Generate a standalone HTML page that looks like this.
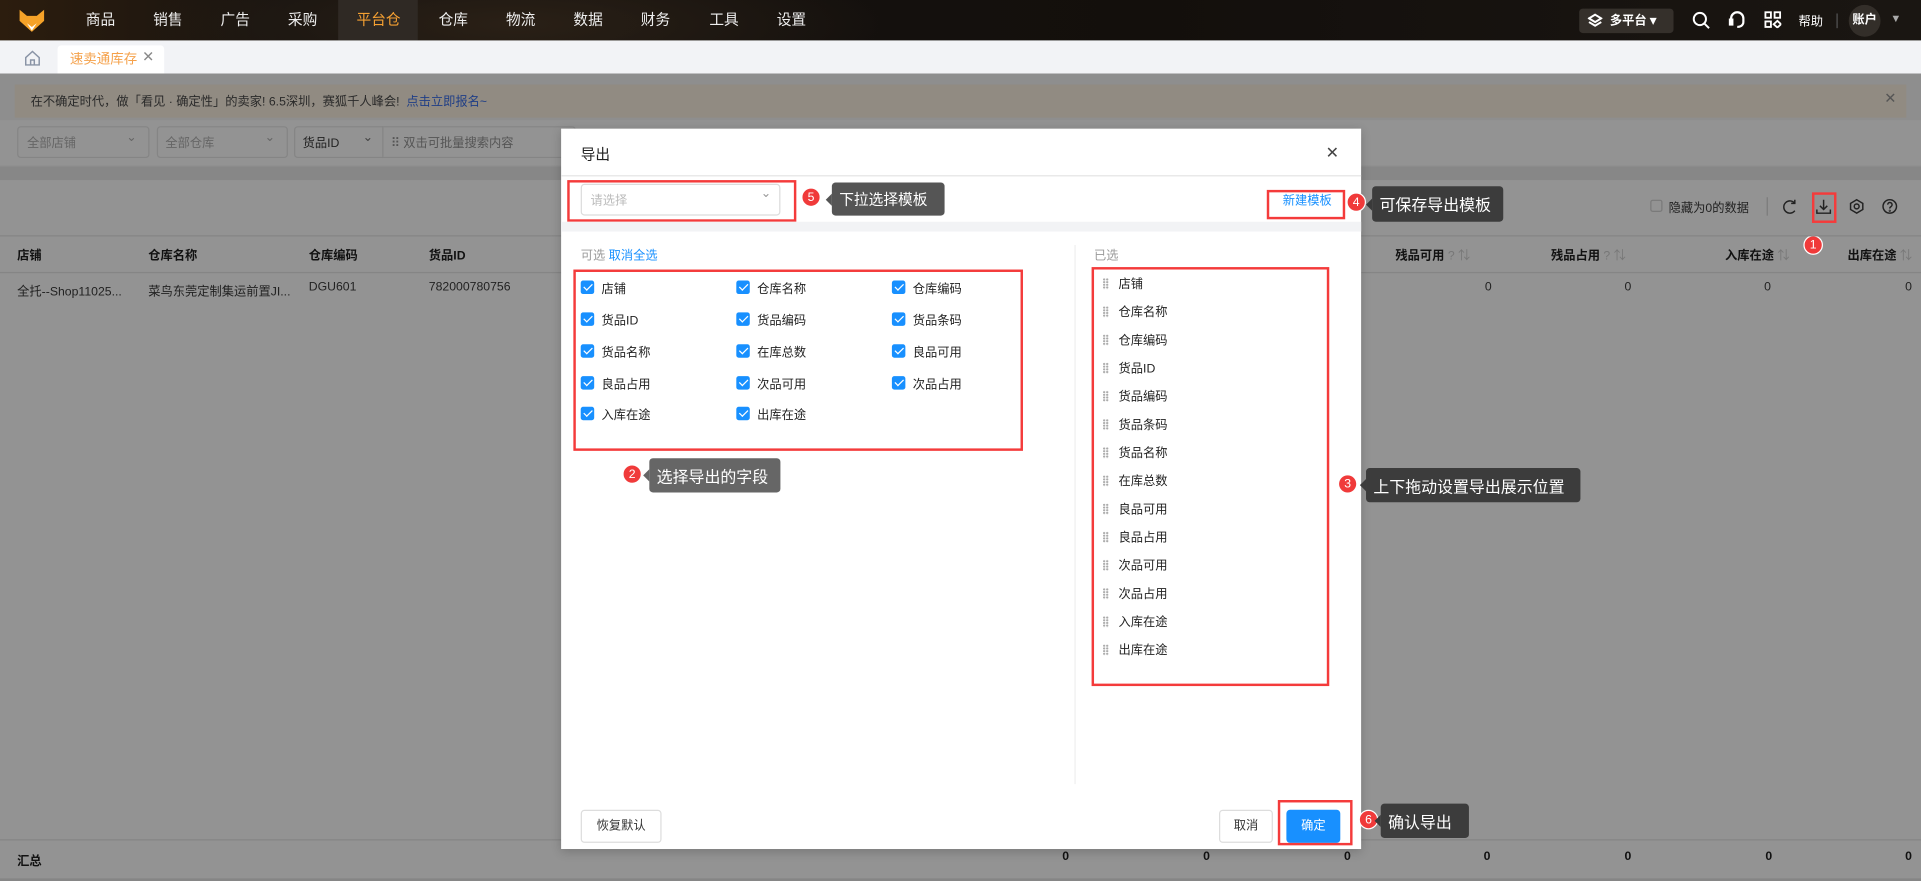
<!DOCTYPE html>
<html><head><meta charset="utf-8">
<style>
*{box-sizing:border-box;margin:0;padding:0}
html,body{width:1921px;height:881px;overflow:hidden;background:#8f8f8f}
body{font-family:"Liberation Sans","Noto Sans CJK SC",sans-serif}
#w{position:absolute;left:0;top:0;width:1568px;height:719px;transform:scale(1.22513);transform-origin:0 0;font-size:11px;color:#222}
.a{position:absolute}
.nav{left:0;top:0;width:1568px;height:33px;background:radial-gradient(ellipse 300px 60px at 420px 20px,#2a2016,transparent),linear-gradient(90deg,#2c1d0e 0%,#171310 15%,#130f0c 60%,#1a1612 100%)}
.nav .m{top:9px;color:#eee;font-size:12px}
.t,.h{white-space:nowrap;margin-top:-2px}
.cb{width:11px;height:11px;background:#1890ff;border-radius:2px}
.cb:after{content:"";position:absolute;left:3.5px;top:1px;width:3px;height:6px;border:solid #fff;border-width:0 1.5px 1.5px 0;transform:rotate(45deg)}
.red{border:2px solid #f43b3b}
.bd{width:16px;height:16px;border-radius:50%;background:#f03a3a;color:#fff;font-size:10px;text-align:center;line-height:15px;border:1px solid #fff}
.tip{background:#3c3c3c;color:#fff;font-size:12px;border-radius:3px;padding:0 6px;display:flex;align-items:center}
.tip .t{margin-top:0}
.tip:before{content:"";position:absolute;left:-5px;top:50%;margin-top:-5px;border:5px solid transparent;border-left:0;border-right-color:inherit}
.h{font-weight:bold;font-size:10px;color:#111}
.hd{width:5px;height:9px;background:radial-gradient(circle,#aaa 0.8px,transparent 1px) 0 0/2.5px 2.2px}
.btn{border:1px solid #ddd;border-radius:3px;background:#fff;font-size:10px;text-align:center;color:#333}
</style></head><body><div id="w">
<div class="a nav">
<svg class="a" style="left:15px;top:7px" width="22" height="20" viewBox="0 0 22 20"><path d="M1 1 L7 6 L15 6 L21 1 L21 10 L11 19 L1 10 Z" fill="#f5a228"/><path d="M7 12 L11 15 L15 12 L11 18Z" fill="#fff"/></svg>
<span class="a m t" style="left:70px">商品</span><span class="a m t" style="left:125px">销售</span><span class="a m t" style="left:180px">广告</span><span class="a m t" style="left:235px">采购</span>
<div class="a" style="left:276px;top:0;width:65px;height:33px;background:#2f2924"></div>
<span class="a m t" style="left:291px;color:#f5a032">平台仓</span>
<span class="a m t" style="left:358px">仓库</span><span class="a m t" style="left:413px">物流</span><span class="a m t" style="left:468px">数据</span><span class="a m t" style="left:523px">财务</span><span class="a m t" style="left:579px">工具</span><span class="a m t" style="left:634px">设置</span>
<div class="a" style="left:1289px;top:7px;width:77px;height:20px;background:#35302b;border-radius:3px"></div>
<svg class="a" style="left:1296px;top:11px" width="12" height="12" viewBox="0 0 12 12" fill="none" stroke="#fff" stroke-width="1.6"><path d="M6 1L11 4 6 7 1 4Z"/><path d="M1 7L6 10 11 7"/></svg>
<span class="a t" style="left:1314px;top:10px;color:#fff;font-size:10px;font-weight:bold">多平台 ▾</span>
<svg class="a" style="left:1381px;top:9px" width="15" height="15" viewBox="0 0 15 15" fill="none" stroke="#fff" stroke-width="1.6"><circle cx="6.5" cy="6.5" r="5"/><path d="M10 10L14 14"/></svg>
<svg class="a" style="left:1411px;top:9px" width="14" height="15" viewBox="0 0 14 15" fill="none" stroke="#fff" stroke-width="1.8"><path d="M2 9V6a5 5 0 0110 0v3M12 9c0 3-3 4-5 4"/><rect x="1" y="7" width="2" height="4" fill="#fff"/></svg>
<svg class="a" style="left:1440px;top:9px" width="14" height="14" viewBox="0 0 14 14" fill="none" stroke="#fff" stroke-width="1.5"><rect x="1" y="1" width="4.5" height="4.5"/><rect x="8.5" y="1" width="4.5" height="4.5"/><rect x="1" y="8.5" width="4.5" height="4.5"/><path d="M10.75 8l3 2.75-3 2.75-3-2.75z"/></svg>
<span class="a t" style="left:1468px;top:11px;color:#fff;font-size:10px">帮助</span>
<div class="a" style="left:1499px;top:11px;width:1px;height:12px;background:#555"></div>
<div class="a" style="left:1509px;top:4px;width:26px;height:26px;border-radius:50%;background:#332e29;color:#fff;font-size:10px;font-weight:bold;text-align:center;line-height:26px">账户</div>
<span class="a" style="left:1543px;top:10px;color:#aaa;font-size:9px">▼</span>
</div>
<div class="a" style="left:0;top:33px;width:1568px;height:27px;background:#f2f3f6"></div>
<svg class="a" style="left:20px;top:41px" width="13" height="13" viewBox="0 0 13 13" fill="none" stroke="#8a94a6" stroke-width="1.2"><path d="M1 6L6.5 1 12 6V12H1Z"/><path d="M5 12V8h3v4"/></svg>
<div class="a" style="left:47px;top:37px;width:87px;height:23px;background:#fff;border-radius:3px 3px 0 0"></div>
<span class="a t" style="left:57px;top:42px;color:#f5a14a;font-size:11px">速卖通库存</span>
<span class="a" style="left:116px;top:39px;color:#888;font-size:12px">✕</span>
<div class="a" style="left:0;top:60px;width:1568px;height:659px;background:#8e8e8e"></div>
<div class="a" style="left:12px;top:69px;width:1544px;height:27px;background:#918b82"></div>
<span class="a t" style="left:25px;top:76px;font-size:10px;color:#2a2a2a">在不确定时代，做「看见 · 确定性」的卖家! 6.5深圳，赛狐千人峰会! &nbsp;<span style="color:#1f3e86">点击立即报名~</span></span>
<span class="a" style="left:1538px;top:73px;color:#555;font-size:12px">✕</span>
<div class="a" style="left:0;top:98px;width:1568px;height:37px;background:#939393"></div>
<div class="a" style="left:14px;top:103px;width:108px;height:26px;border:1px solid #858585;border-radius:3px"></div><span class="a t" style="left:22px;top:110px;color:#666;font-size:10px">全部店铺</span><span class="a" style="left:103px;top:107px;color:#666;font-size:10px">⌄</span>
<div class="a" style="left:128px;top:103px;width:107px;height:26px;border:1px solid #858585;border-radius:3px"></div><span class="a t" style="left:135px;top:110px;color:#666;font-size:10px">全部仓库</span><span class="a" style="left:216px;top:107px;color:#666;font-size:10px">⌄</span>
<div class="a" style="left:240px;top:103px;width:230px;height:26px;border:1px solid #858585;border-radius:3px"></div><div class="a" style="left:312px;top:103px;width:1px;height:26px;background:#858585"></div>
<span class="a t" style="left:247px;top:110px;color:#222;font-size:10px">货品ID</span><span class="a" style="left:296px;top:107px;color:#444;font-size:10px">⌄</span>
<span class="a t" style="left:319px;top:110px;color:#555;font-size:10px">⠿ 双击可批量搜索内容</span>
<div class="a" style="left:0;top:136px;width:1568px;height:11px;background:#878787"></div>
<div class="a" style="left:0;top:147px;width:1568px;height:572px;background:#939393"></div>
<div class="a" style="left:1347px;top:163px;width:10px;height:10px;border:1px solid #7a7a7a;border-radius:2px"></div>
<span class="a t" style="left:1362px;top:163px;font-size:10px;color:#222">隐藏为0的数据</span>
<div class="a" style="left:1442px;top:161px;width:1px;height:15px;background:#7a7a7a"></div>
<svg class="a" style="left:1455px;top:162px" width="12" height="13" viewBox="0 0 12 13" fill="none" stroke="#222" stroke-width="1.2"><path d="M10 4A5 5 0 1 0 10 10M10 1v3H7"/></svg>
<div class="a red" style="left:1479px;top:157px;width:20px;height:25px"></div>
<svg class="a" style="left:1482px;top:162px" width="13" height="13" viewBox="0 0 13 13" fill="none" stroke="#222" stroke-width="1.2"><path d="M6.5 1v8M3.5 6l3 3 3-3M1 9v3h11V9"/></svg>
<svg class="a" style="left:1509px;top:162px" width="13" height="13" viewBox="0 0 13 13" fill="none" stroke="#222" stroke-width="1.2"><path d="M6.5 1l5 3v5l-5 3-5-3V4z"/><circle cx="6.5" cy="6.5" r="2"/></svg>
<svg class="a" style="left:1536px;top:162px" width="13" height="13" viewBox="0 0 13 13" fill="none" stroke="#222" stroke-width="1.2"><circle cx="6.5" cy="6.5" r="5.5"/><path d="M4.8 5a1.8 1.8 0 113 1.4c-.8.5-1.3.8-1.3 1.8"/><circle cx="6.5" cy="10" r=".3"/></svg>
<div class="a bd" style="left:1472px;top:192px">1</div>
<div class="a" style="left:0;top:192px;width:1568px;height:1px;background:#858585"></div>
<div class="a" style="left:0;top:222px;width:1568px;height:1px;background:#858585"></div>
<span class="a h" style="left:14px;top:202px">店铺</span><span class="a h" style="left:121px;top:202px">仓库名称</span><span class="a h" style="left:252px;top:202px">仓库编码</span><span class="a h" style="left:350px;top:202px">货品ID</span>
<span class="a h" style="left:1139px;top:202px">残品可用 <span style="color:#777;font-weight:normal">? ⇅</span></span>
<span class="a h" style="left:1266px;top:202px">残品占用 <span style="color:#777;font-weight:normal">? ⇅</span></span>
<span class="a h" style="left:1408px;top:202px">入库在途 <span style="color:#777;font-weight:normal">⇅</span></span>
<span class="a h" style="left:1508px;top:202px">出库在途 <span style="color:#777;font-weight:normal">⇅</span></span>
<span class="a t" style="left:14px;top:231px;font-size:10px">全托--Shop11025...</span><span class="a t" style="left:121px;top:231px;font-size:10px">菜鸟东莞定制集运前置JI...</span><span class="a t" style="left:252px;top:231px;font-size:10px">DGU601</span><span class="a t" style="left:350px;top:231px;font-size:10px">782000780756</span>
<span class="a t" style="left:1212px;top:231px;font-size:10px">0</span><span class="a t" style="left:1326px;top:231px;font-size:10px">0</span><span class="a t" style="left:1440px;top:231px;font-size:10px">0</span><span class="a t" style="left:1555px;top:231px;font-size:10px">0</span>
<div class="a" style="left:0;top:685px;width:1568px;height:1px;background:#858585"></div>
<div class="a" style="left:0;top:717px;width:1568px;height:2px;background:#858585"></div>
<span class="a h" style="left:14px;top:696px">汇总</span>
<span class="a h" style="left:867px;top:696px">0</span><span class="a h" style="left:982px;top:696px">0</span><span class="a h" style="left:1097px;top:696px">0</span><span class="a h" style="left:1211px;top:696px">0</span><span class="a h" style="left:1326px;top:696px">0</span><span class="a h" style="left:1441px;top:696px">0</span><span class="a h" style="left:1555px;top:696px">0</span>
<div class="a" style="left:458px;top:105px;width:653px;height:588px;background:#fff;box-shadow:0 2px 8px rgba(0,0,0,.2)"></div>
<span class="a t" style="left:474px;top:119px;font-size:12px;color:#222">导出</span>
<span class="a" style="left:1082px;top:117px;font-size:13px;color:#444">✕</span>
<div class="a" style="left:458px;top:143px;width:653px;height:1px;background:#e4e4e4"></div>
<div class="a" style="left:474px;top:150px;width:163px;height:26px;border:1px solid #dcdcdc;border-radius:3px"></div>
<span class="a t" style="left:482px;top:157px;font-size:10px;color:#bbb">请选择</span><span class="a" style="left:621px;top:153px;font-size:10px;color:#999">⌄</span>
<div class="a red" style="left:463px;top:147px;width:187px;height:34px"></div>
<div class="a bd" style="left:654px;top:153px">5</div>
<div class="a tip" style="left:679px;top:149px;width:92px;height:27px;border-color:#555;background:#555"><span class="t">下拉选择模板</span></div>
<span class="a t" style="left:1047px;top:157px;font-size:10px;color:#1890ff">新建模板</span>
<div class="a red" style="left:1034px;top:155px;width:64px;height:24px"></div>
<div class="a bd" style="left:1099px;top:157px">4</div>
<div class="a tip" style="left:1120px;top:152px;width:107px;height:29px;border-color:#3a3a3a"><span class="t" style="font-size:13px">可保存导出模板</span></div>
<div class="a" style="left:458px;top:181px;width:653px;height:8px;background:#f2f3f5"></div>
<span class="a t" style="left:474px;top:202px;font-size:10px;color:#999">可选 <span style="color:#1890ff">取消全选</span></span>
<div class="a red" style="left:468px;top:220px;width:367px;height:148px"></div>
<div class="a bd" style="left:508px;top:379px">2</div>
<div class="a tip" style="left:530px;top:374px;width:107px;height:28px;border-color:#666;background:#666"><span class="t" style="font-size:13px">选择导出的字段</span></div>
<div class="a" style="left:877px;top:200px;width:1px;height:440px;background:#eee"></div>
<span class="a t" style="left:893px;top:202px;font-size:10px;color:#999">已选</span>
<div class="a red" style="left:891px;top:218px;width:194px;height:342px"></div>
<div class="a bd" style="left:1092px;top:387px">3</div>
<div class="a tip" style="left:1115px;top:382px;width:175px;height:28px;border-color:#3c3c3c"><span class="t" style="font-size:13px">上下拖动设置导出展示位置</span></div>
<div class="a btn" style="left:474px;top:661px;width:66px;height:27px;line-height:25px">恢复默认</div>
<div class="a btn" style="left:995px;top:661px;width:44px;height:27px;line-height:25px">取消</div>
<div class="a" style="left:1050px;top:661px;width:44px;height:27px;background:#1890ff;border-radius:3px;color:#fff;font-size:10px;text-align:center;line-height:27px">确定</div>
<div class="a red" style="left:1043px;top:653px;width:61px;height:37px"></div>
<div class="a bd" style="left:1109px;top:661px">6</div>
<div class="a tip" style="left:1127px;top:656px;width:72px;height:28px;border-color:#3a3a3a"><span class="t" style="font-size:13px">确认导出</span></div>
<div class="a cb" style="left:474px;top:229px"></div><span class="a t" style="left:491px;top:229px;font-size:10px">店铺</span>
<div class="a cb" style="left:601px;top:229px"></div><span class="a t" style="left:618px;top:229px;font-size:10px">仓库名称</span>
<div class="a cb" style="left:728px;top:229px"></div><span class="a t" style="left:745px;top:229px;font-size:10px">仓库编码</span>
<div class="a cb" style="left:474px;top:255px"></div><span class="a t" style="left:491px;top:255px;font-size:10px">货品ID</span>
<div class="a cb" style="left:601px;top:255px"></div><span class="a t" style="left:618px;top:255px;font-size:10px">货品编码</span>
<div class="a cb" style="left:728px;top:255px"></div><span class="a t" style="left:745px;top:255px;font-size:10px">货品条码</span>
<div class="a cb" style="left:474px;top:281px"></div><span class="a t" style="left:491px;top:281px;font-size:10px">货品名称</span>
<div class="a cb" style="left:601px;top:281px"></div><span class="a t" style="left:618px;top:281px;font-size:10px">在库总数</span>
<div class="a cb" style="left:728px;top:281px"></div><span class="a t" style="left:745px;top:281px;font-size:10px">良品可用</span>
<div class="a cb" style="left:474px;top:307px"></div><span class="a t" style="left:491px;top:307px;font-size:10px">良品占用</span>
<div class="a cb" style="left:601px;top:307px"></div><span class="a t" style="left:618px;top:307px;font-size:10px">次品可用</span>
<div class="a cb" style="left:728px;top:307px"></div><span class="a t" style="left:745px;top:307px;font-size:10px">次品占用</span>
<div class="a cb" style="left:474px;top:332px"></div><span class="a t" style="left:491px;top:332px;font-size:10px">入库在途</span>
<div class="a cb" style="left:601px;top:332px"></div><span class="a t" style="left:618px;top:332px;font-size:10px">出库在途</span>
<div class="a hd" style="left:900px;top:227px"></div><span class="a t" style="left:913px;top:225px;font-size:10px">店铺</span>
<div class="a hd" style="left:900px;top:250px"></div><span class="a t" style="left:913px;top:248px;font-size:10px">仓库名称</span>
<div class="a hd" style="left:900px;top:273px"></div><span class="a t" style="left:913px;top:271px;font-size:10px">仓库编码</span>
<div class="a hd" style="left:900px;top:296px"></div><span class="a t" style="left:913px;top:294px;font-size:10px">货品ID</span>
<div class="a hd" style="left:900px;top:319px"></div><span class="a t" style="left:913px;top:317px;font-size:10px">货品编码</span>
<div class="a hd" style="left:900px;top:342px"></div><span class="a t" style="left:913px;top:340px;font-size:10px">货品条码</span>
<div class="a hd" style="left:900px;top:365px"></div><span class="a t" style="left:913px;top:363px;font-size:10px">货品名称</span>
<div class="a hd" style="left:900px;top:388px"></div><span class="a t" style="left:913px;top:386px;font-size:10px">在库总数</span>
<div class="a hd" style="left:900px;top:411px"></div><span class="a t" style="left:913px;top:409px;font-size:10px">良品可用</span>
<div class="a hd" style="left:900px;top:434px"></div><span class="a t" style="left:913px;top:432px;font-size:10px">良品占用</span>
<div class="a hd" style="left:900px;top:457px"></div><span class="a t" style="left:913px;top:455px;font-size:10px">次品可用</span>
<div class="a hd" style="left:900px;top:480px"></div><span class="a t" style="left:913px;top:478px;font-size:10px">次品占用</span>
<div class="a hd" style="left:900px;top:503px"></div><span class="a t" style="left:913px;top:501px;font-size:10px">入库在途</span>
<div class="a hd" style="left:900px;top:526px"></div><span class="a t" style="left:913px;top:524px;font-size:10px">出库在途</span>
</div></body></html>
